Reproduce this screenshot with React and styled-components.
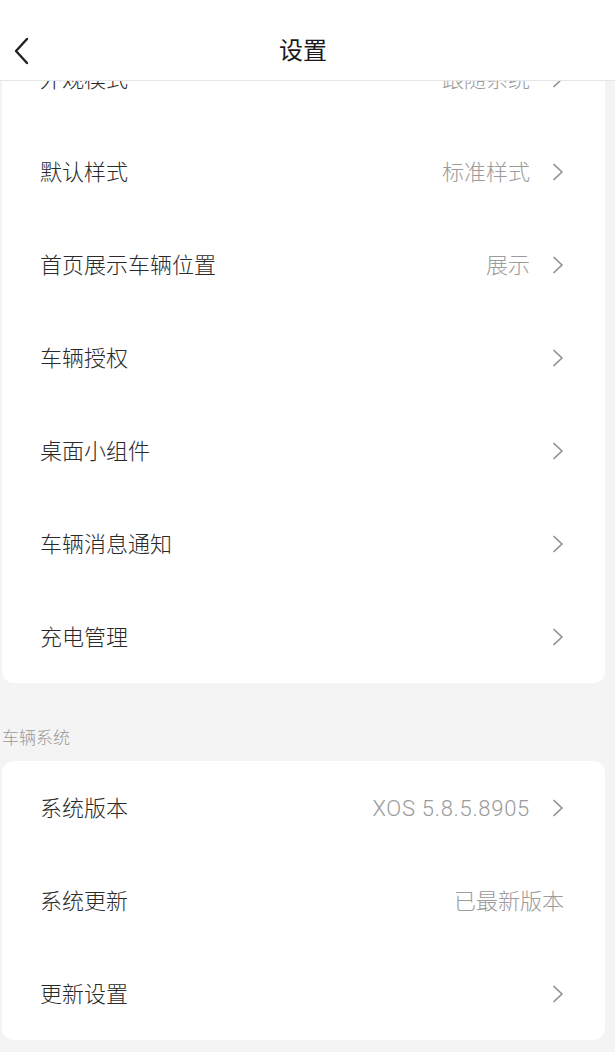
import React from 'react'
import styled, { createGlobalStyle } from 'styled-components'

const GlobalStyle = createGlobalStyle`
	html, body {
		margin: 0;
		padding: 0;
		background: #f4f4f4;
		font-family: "Noto Sans CJK SC", "Noto Sans", sans-serif;
		-webkit-font-smoothing: antialiased;
	}
`

const Page = styled.div`
	width: 615px;
	height: 1052px;
	overflow: hidden;
	position: relative;
	background: #f4f4f4;
`

const Header = styled.header`
	position: absolute;
	top: 0;
	left: 0;
	right: 0;
	height: 81px;
	background: #fff;
	border-bottom: 1px solid #e6e6e6;
	display: flex;
	align-items: center;
	justify-content: center;
	padding-top: 18px;
	box-sizing: border-box;
	z-index: 2;
`

const BackButton = styled.button`
	position: absolute;
	left: 8px;
	top: 32px;
	background: none;
	border: none;
	padding: 4px;
	margin: 0;
	display: flex;
	color: #222;
`

const Title = styled.h1`
	margin: 0 9px 0 0;
	font-size: 24px;
	font-weight: 400;
	color: #1a1a1a;
	line-height: 1;
`

const Scroll = styled.div`
	padding-top: 32px;
	display: flex;
	flex-direction: column;
`

const Card = styled.section`
	background: #fff;
	border-radius: 12px;
	margin: 0 10px 0 2px;
	overflow: hidden;
`

const SectionLabel = styled.div`
	font-size: 17px;
	line-height: 24px;
	color: #999;
	font-weight: 300;
	padding: 42px 0 12px 2px;
`

const Row = styled.div`
	height: 93px;
	display: flex;
	align-items: center;
	padding: 0 41px 0 38px;
`

const Label = styled.span`
	flex: 1;
	font-size: 22px;
	line-height: 26px;
	font-weight: 300;
	color: #2a2a2a;
	margin-top: -4px;
`

const Value = styled.span`
	font-family: ${p => p.$latin ? 'Roboto, ' : ''}"Noto Sans CJK SC", sans-serif;
	font-size: 22px;
	line-height: 26px;
	color: #9b9b9b;
	font-weight: 300;
	letter-spacing: ${p => p.$latin ? '0.7px' : '0'};
	margin-top: ${p => p.$latin ? '2px' : '-4px'};
`

const ChevronWrap = styled.span`
	display: flex;
	margin-left: 22px;
	color: #8f8f8f;
`

const Chevron = () => (
	<ChevronWrap>
		<svg width="12" height="20" viewBox="0 0 12 20" fill="none">
			<polyline points="2,2.5 10,10 2,17.5" stroke="currentColor" strokeWidth="1.7" strokeLinecap="round" strokeLinejoin="round"/>
		</svg>
	</ChevronWrap>
)

const Item = ({label, value, latin, arrow = true}) => (
	<Row>
		<Label>{label}</Label>
		{value && <Value $latin={latin}>{value}</Value>}
		{arrow && <Chevron/>}
	</Row>
)

const general = [
	{label: '外观模式', value: '跟随系统'},
	{label: '默认样式', value: '标准样式'},
	{label: '首页展示车辆位置', value: '展示'},
	{label: '车辆授权'},
	{label: '桌面小组件'},
	{label: '车辆消息通知'},
	{label: '充电管理'},
]

const system = [
	{label: '系统版本', value: 'XOS 5.8.5.8905', latin: true},
	{label: '系统更新', value: '已最新版本', arrow: false},
	{label: '更新设置'},
]

const App = () => (
	<Page>
		<GlobalStyle/>
		<Header>
			<BackButton aria-label="返回">
				<svg width="18" height="30" viewBox="0 0 18 30" fill="none">
					<polyline points="15,3 4,15 15,27" stroke="currentColor" strokeWidth="2.4" strokeLinecap="round" strokeLinejoin="round"/>
				</svg>
			</BackButton>
			<Title>设置</Title>
		</Header>
		<Scroll>
			<Card>
				{general.map(it => <Item key={it.label} {...it}/>)}
			</Card>
			<SectionLabel>车辆系统</SectionLabel>
			<Card>
				{system.map(it => <Item key={it.label} {...it}/>)}
			</Card>
		</Scroll>
	</Page>
)

export default App
